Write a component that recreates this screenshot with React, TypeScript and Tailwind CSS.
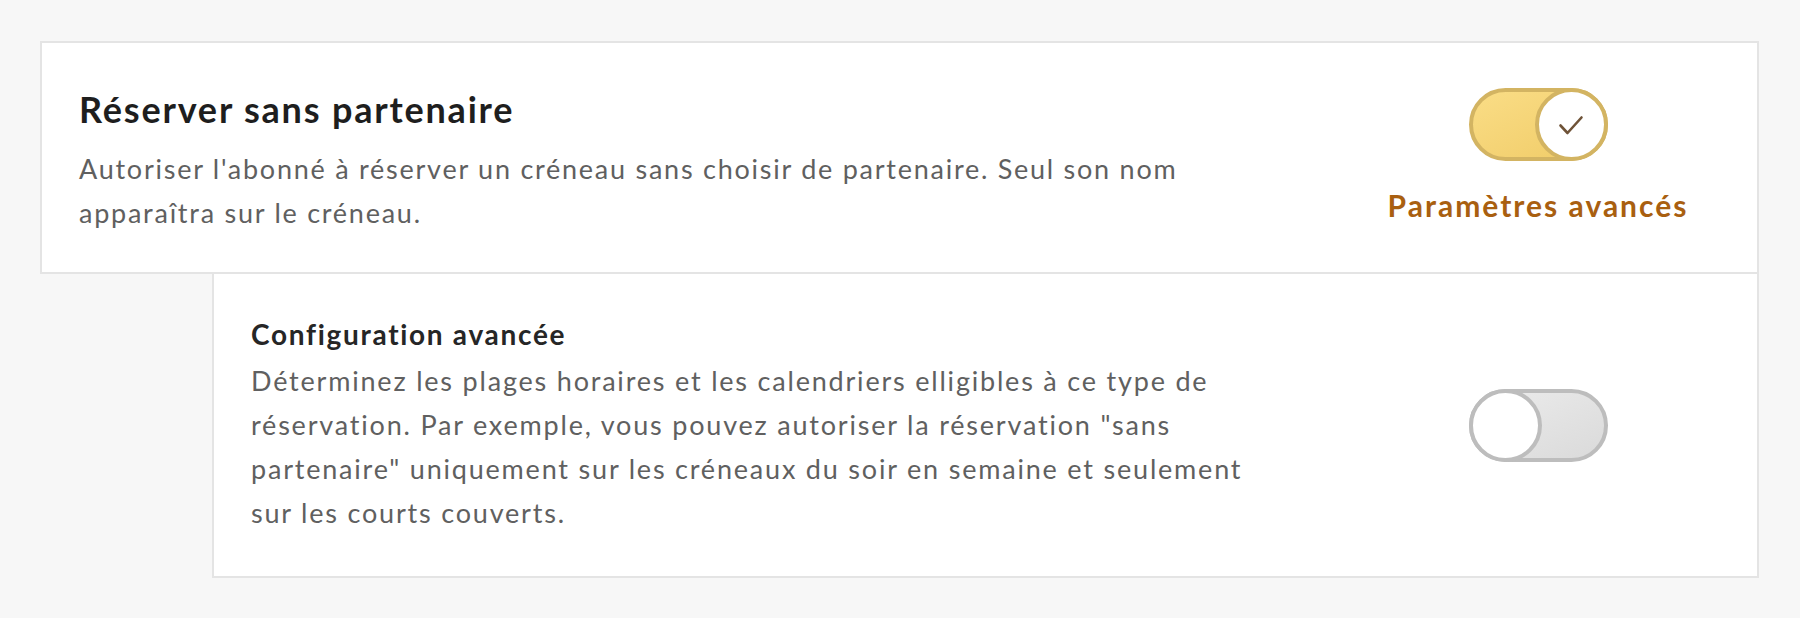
import React from "react";

function Check() {
  return (
    <svg width="26" height="20" viewBox="0 0 26 20" fill="none">
      <path d="M2.5 10.5 L9.5 18 L23.5 2.5" stroke="#6f5338" strokeWidth="2.6" strokeLinecap="round" strokeLinejoin="round" />
    </svg>
  );
}

function ToggleOn() {
  return (
    <div className="relative h-[73px] w-[139px] rounded-full border-[4px] border-[#d3b462] bg-gradient-to-br from-[#fadd86] to-[#f0cb66]">
      <div className="absolute right-[-4px] top-[-4px] flex h-[73px] w-[73px] items-center justify-center rounded-full border-[4px] border-[#d3b462] bg-white">
        <Check />
      </div>
    </div>
  );
}

function ToggleOff() {
  return (
    <div className="relative h-[73px] w-[139px] rounded-full border-[4px] border-[#bdbdbd] bg-gradient-to-br from-[#ececec] to-[#dadada]">
      <div className="absolute left-[-4px] top-[-4px] h-[73px] w-[73px] rounded-full border-[4px] border-[#bdbdbd] bg-white" />
    </div>
  );
}

export default function App() {
  return (
    <div
      className="min-h-screen bg-[#f7f7f7] pl-[40px] pr-[41px] pt-[41px]"
      style={{ fontFamily: "Lato, 'Noto Sans', sans-serif" }}
    >
      <div className="flex items-center border-[2px] border-[#e4e4e4] bg-white pl-[37px] pr-[69px] pt-[45px] pb-[37px]">
        <div className="min-w-0 flex-1">
          <h1 className="text-[36px] font-bold leading-[40px] tracking-[1.8px] text-[#1e1e1e]">Réserver sans partenaire</h1>
          <p className="mt-[18px] whitespace-nowrap text-[27px] leading-[44px] tracking-[1.75px] text-[#606060]">
            Autoriser l'abonné à réserver un créneau sans choisir de partenaire. Seul son nom
            <br />
            apparaîtra sur le créneau.
          </p>
        </div>
        <div className="ml-[60px] flex w-[300px] shrink-0 flex-col items-center gap-[26px] pb-[12px]">
          <ToggleOn />
          <span className="whitespace-nowrap text-[30px] font-bold leading-[36px] tracking-[2px] text-[#a95f10]">Paramètres avancés</span>
        </div>
      </div>
      <div className="ml-[172px] flex items-center border-[2px] border-t-0 border-[#e4e4e4] bg-white pl-[37px] pr-[69px] pt-[42px] pb-[41px]">
        <div className="min-w-0 flex-1">
          <h2 className="text-[28px] font-bold leading-[36px] tracking-[1.7px] text-[#262626]">Configuration avancée</h2>
          <p className="mt-[7px] whitespace-nowrap text-[27px] leading-[44px] tracking-[1.8px] text-[#606060]">
            Déterminez les plages horaires et les calendriers elligibles à ce type de
            <br />
            réservation. Par exemple, vous pouvez autoriser la réservation "sans
            <br />
            partenaire" uniquement sur les créneaux du soir en semaine et seulement
            <br />
            sur les courts couverts.
          </p>
        </div>
        <div className="ml-[60px] flex w-[300px] shrink-0 flex-col items-center">
          <ToggleOff />
        </div>
      </div>
    </div>
  );
}
